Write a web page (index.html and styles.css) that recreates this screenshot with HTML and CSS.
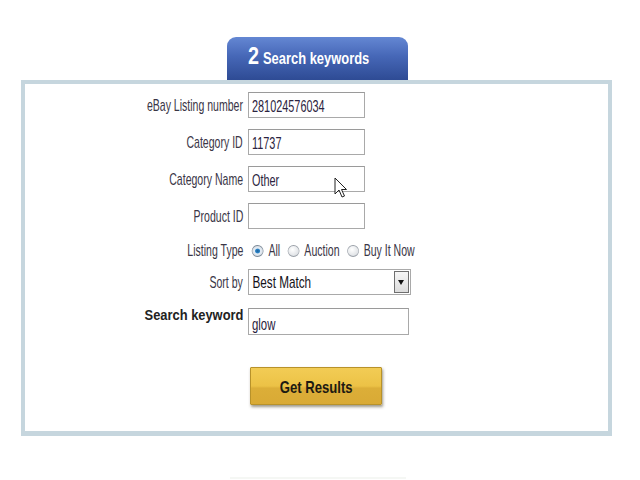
FILE: index.html
```html
<!DOCTYPE html>
<html>
<head>
<meta charset="utf-8">
<link rel="stylesheet" href="styles.css">
</head>
<body>
<div class="page">
  <div class="tab"><span class="num">2</span><span class="tab-title">Search keywords</span></div>
  <div class="box">
    <form class="form">
      <label class="lbl"><span class="t">eBay Listing number</span></label>
      <div class="field"><div class="input"><span class="v">281024576034</span></div></div>

      <label class="lbl"><span class="t">Category ID</span></label>
      <div class="field"><div class="input"><span class="v">11737</span></div></div>

      <label class="lbl"><span class="t">Category Name</span></label>
      <div class="field"><div class="input"><span class="v">Other</span></div></div>

      <label class="lbl"><span class="t">Product ID</span></label>
      <div class="field"><div class="input"></div></div>

      <label class="lbl lt"><span class="t">Listing Type</span></label>
      <div class="field radios">
        <div class="radio-set">
          <span class="radio first on"></span><span class="rtxt">All</span>
          <span class="radio"></span><span class="rtxt">Auction</span>
          <span class="radio"></span><span class="rtxt">Buy It Now</span>
        </div>
      </div>

      <label class="lbl sb"><span class="t">Sort by</span></label>
      <div class="field sb"><div class="select"><span class="sel-text">Best Match</span><span class="arrow"></span></div></div>

      <label class="lbl kw"><span class="tb">Search keyword</span></label>
      <div class="field kw"><div class="input wide"><span class="v">glow</span></div></div>

      <div class="btn-row"><button type="button" class="btn"><span class="btn-text">Get Results</span></button></div>
    </form>
  </div>
  <div class="foot-line"></div>
</div>
<svg class="cursor" width="14" height="22" viewBox="0 0 14 22"><path d="M1 1 L1 17 L5 13 L8 20 L10.5 19 L7.5 12.5 L12.5 12.5 Z" fill="#fff" stroke="#222" stroke-width="1"/></svg>
</body>
</html>
```
FILE: styles.css
```css
html, body { margin: 0; padding: 0; background: #fff; }
body { font-family: "Liberation Sans", Arial, sans-serif; position: relative; width: 640px; height: 480px; overflow: hidden; }
.page { padding-top: 37px; }
.tab {
  margin-left: 227px; width: 181px; height: 43px; box-sizing: border-box;
  border-radius: 9px 9px 0 0;
  background: linear-gradient(#6487d3 0%, #4667b7 45%, #2e4b94 100%);
  color: #fff; display: flex; align-items: baseline; padding-left: 21px; padding-top: 6px;
  font-weight: bold; white-space: nowrap;
}
.num { display: inline-block; font-size: 23px; transform: scaleX(0.86); transform-origin: left; margin-right: 2px; }
.tab-title { display: inline-block; font-size: 17px; transform: scaleX(0.76); transform-origin: left; }
.box {
  margin-left: 21px; width: 591px; height: 356px; box-sizing: border-box;
  border: 4px solid #c6d6de; border-bottom-width: 5px; background: #fff;
}
.form {
  display: grid; grid-template-columns: 218px 1fr; column-gap: 5px;
  padding-top: 8px; margin: 0;
}
.lbl { text-align: right; font-size: 17px; color: #3a3646; align-self: center; margin-bottom: 11px; white-space: nowrap; line-height: 20px; padding-top: 1px; }
.t { display: inline-block; transform: scaleX(0.62); transform-origin: right center; }
.field { margin-bottom: 11px; display: flex; align-items: center; }
.input {
  width: 117px; height: 26px; box-sizing: border-box; border: 1px solid #a9a9a9;
  font-size: 17px; line-height: 21px; color: #2b2340; padding: 3px 0 0 3px; background: #fff;
  border-top-color: #9a9a9a; white-space: nowrap;
}
.v { display: inline-block; transform: scaleX(0.64); transform-origin: left center; }
.input.wide { width: 161px; height: 27px; padding-top: 5px; }
.input.wide .v { transform: scaleX(0.67); }
.lbl.lt, .field.radios { height: 20px; margin-bottom: 8px; }
.field.radios { padding-top: 2px; box-sizing: border-box; }
.radio-set {
  display: flex; align-items: center; font-size: 17px; color: #3a3646; white-space: nowrap;
  transform: scaleX(0.62); transform-origin: left center;
}
.radio {
  width: 19px; height: 12px; border-radius: 50%; box-sizing: border-box;
  border: 1px solid #9aa0a8; background: radial-gradient(ellipse at 40% 35%, #ffffff, #d3d7dc);
  margin: 0 8px 0 12px;
}
.radio.first { margin-left: 6px; }
.radio.on { background: radial-gradient(ellipse, #1b5e98 0, #2f86c8 28%, #e6eef6 40%, #c8ccd2 100%); border-color: #7d8a98; }
.lbl.sb { margin-bottom: 13px; }
.field.sb { margin-bottom: 13px; }
.select {
  width: 163px; height: 26px; box-sizing: border-box; border: 1px solid #a9a9a9;
  display: flex; align-items: center; justify-content: space-between; background: #fff;
}
.sel-text { display: inline-block; font-size: 17px; color: #141218; padding: 2px 0 0 5px; transform: scaleX(0.69); transform-origin: left center; white-space: nowrap; }
.arrow {
  width: 15px; height: 22px; margin-right: 1px; box-sizing: border-box;
  border: 1px solid #6f6f6f; background: linear-gradient(#f6f6f6, #dcdcdc);
  position: relative;
}
.arrow::after {
  content: ""; position: absolute; left: 3px; top: 8px;
  border-left: 3.5px solid transparent; border-right: 3.5px solid transparent; border-top: 5px solid #111;
}
.lbl.kw { align-self: start; font-weight: bold; font-size: 14px; line-height: 16px; color: #222; margin-top: -1px; padding-top: 0; }
.tb { display: inline-block; transform: scaleX(0.92); transform-origin: right center; }
.field.kw { margin-bottom: 0; }
.btn-row { grid-column: 2; padding-top: 32px; }
.btn {
  margin-left: 2px; width: 132px; height: 38px; border: 1px solid #b8922a; border-radius: 1px;
  background: linear-gradient(#f2cc55 0%, #ecc246 50%, #dcae38 56%, #d9aa35 100%);
  box-shadow: 1px 2px 3px rgba(60,50,20,0.5);
  font-family: inherit; font-weight: bold; font-size: 17px; color: #1d1a12; padding: 3px 0 0 0; white-space: nowrap;
}
.btn-text { display: inline-block; transform: scaleX(0.77); }
.foot-line { margin: 41px 0 0 230px; width: 176px; height: 2px; background: #f5f7f4; }
.cursor { position: absolute; left: 334px; top: 177px; }
```
